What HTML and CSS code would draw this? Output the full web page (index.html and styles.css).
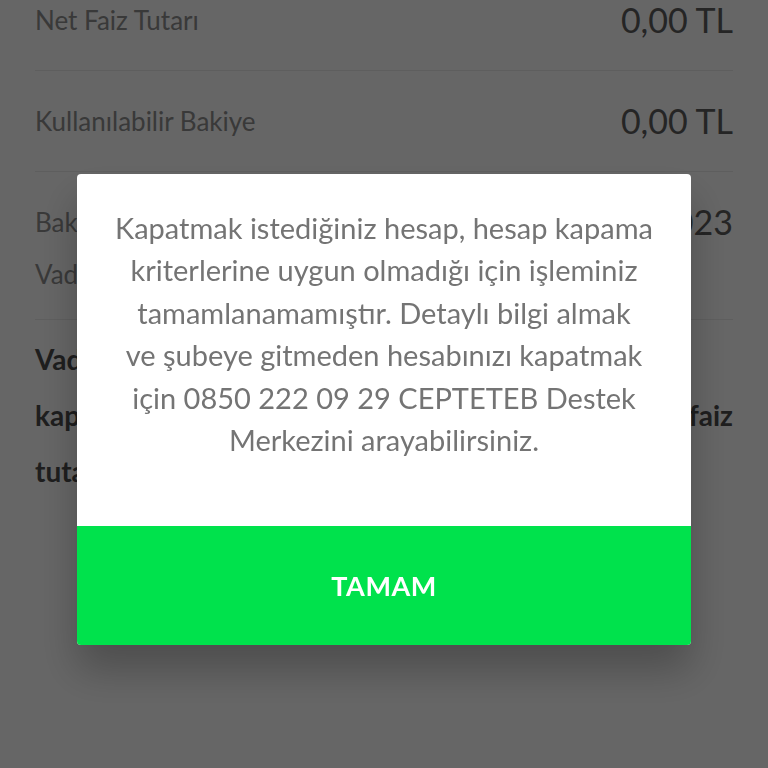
FILE: index.html
```html
<!DOCTYPE html>
<html lang="tr">
<head>
  <meta charset="UTF-8" />
  <meta name="viewport" content="width=device-width, initial-scale=1.0" />
  <title>Hesap Kapama</title>
  <link rel="stylesheet" href="styles.css">
</head>
<body>
  <div class="details">
    <div class="row first">
      <span class="label">Net Faiz Tutarı</span>
      <span class="value">0,00 TL</span>
    </div>
    <div class="row">
      <span class="label">Kullanılabilir Bakiye</span>
      <span class="value">0,00 TL</span>
    </div>
    <div class="row double">
      <div class="line">
        <span class="label">Bakiye Tarihi</span>
        <span class="value">12 Ocak 2023</span>
      </div>
      <div class="line">
        <span class="label">Vade Tarihi</span>
        <span class="value"></span>
      </div>
    </div>

    <p class="note">
      <span>Vadesi dolmadan hesabınızı</span>
      <span class="full">kapatmanız durumunda hesabınıza faiz</span>
      <span>tutarı yansıtılmayacaktır.</span>
    </p>
  </div>

  <div class="overlay">
    <div class="dialog">
      <div class="dialog-body">
        Kapatmak istediğiniz hesap, hesap kapama<br>
        kriterlerine uygun olmadığı için işleminiz<br>
        tamamlanamamıştır. Detaylı bilgi almak<br>
        ve şubeye gitmeden hesabınızı kapatmak<br>
        için 0850 222 09 29 CEPTETEB Destek<br>
        Merkezini arayabilirsiniz.
      </div>
      <button class="dialog-btn">TAMAM</button>
    </div>
  </div>
</body>
</html>
```

FILE: styles.css
```css
* {
  box-sizing: border-box;
}
body {
  margin: 0;
  background: #fff;
  font-family: Lato, "Open Sans", sans-serif;
  overflow: hidden;
  height: 768px;
}
.details {
  padding: 0 35px;
}
.row {
  display: flex;
  justify-content: space-between;
  align-items: center;
  padding: 30px 0;
  border-bottom: 1px solid #ececec;
  line-height: 40px;
}
.row.first {
  padding-top: 0;
}
.row.double {
  flex-direction: column;
  align-items: stretch;
  gap: 12px;
  padding-bottom: 25px;
}
.line {
  display: flex;
  justify-content: space-between;
}
.label {
  font-size: 26px;
  color: #8e8e8e;
}
.value {
  font-size: 34px;
  color: #5c5c5c;
}
.note {
  margin: 11px 0 0;
  font-size: 28px;
  font-weight: 700;
  color: #4c4c4c;
  line-height: 56px;
}
.note span {
  display: block;
}
.note .full {
  text-align: justify;
  text-align-last: justify;
}

/* modal */
.overlay {
  position: fixed;
  inset: 0;
  background: rgba(0, 0, 0, 0.6);
  display: flex;
  justify-content: center;
  align-items: flex-start;
  padding-top: 174px;
}
.dialog {
  width: 614px;
  background: #fff;
  border-radius: 4px;
  overflow: hidden;
  box-shadow: 0 25px 40px rgba(0, 0, 0, 0.25);
}
.dialog-body {
  padding: 33px 20px 65px;
  text-align: center;
  font-size: 29px;
  line-height: 42.4px;
  color: #747474;
  height: 352px;
  white-space: nowrap;
}
.dialog-btn {
  display: block;
  width: 100%;
  height: 119px;
  border: none;
  background: #00e24c;
  color: #fff;
  font-family: inherit;
  font-size: 27px;
  font-weight: 700;
  letter-spacing: 0.5px;
  cursor: pointer;
}
```
